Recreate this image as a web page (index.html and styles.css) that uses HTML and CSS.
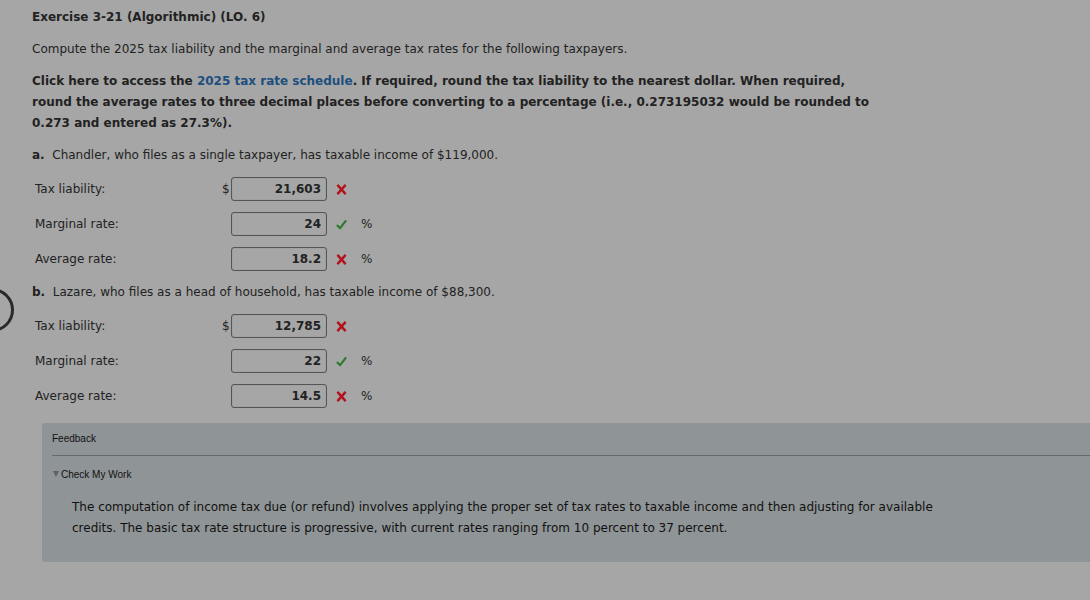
FILE: index.html
```html
<!DOCTYPE html>
<html>
<head>
<meta charset="utf-8">
<link rel="stylesheet" href="styles.css">
</head>
<body>
<div class="ring"></div>
<main class="page">
  <h1 class="title">Exercise 3-21 (Algorithmic) (LO. 6)</h1>
  <p class="intro">Compute the 2025 tax liability and the marginal and average tax rates for the following taxpayers.</p>
  <p class="instr">Click here to access the <a class="link">2025 tax rate schedule</a>. If required, round the tax liability to the nearest dollar. When required, round the average rates to three decimal places before converting to a percentage (i.e., 0.273195032 would be rounded to 0.273 and entered as 27.3%).</p>

  <section class="part">
    <p class="lead"><b>a.</b>&nbsp; Chandler, who files as a single taxpayer, has taxable income of $119,000.</p>
    <div class="row"><span class="lbl">Tax liability:</span><span class="cur">$</span><span class="box">21,603</span><span class="mark"><svg class="ico" viewBox="0 0 12 12"><path d="M1.5 1 L10.5 11 M10.5 1 L1.5 11" stroke="#b3121a" stroke-width="2.6" fill="none"/></svg></span><span class="unit"></span></div>
    <div class="row"><span class="lbl">Marginal rate:</span><span class="cur"></span><span class="box">24</span><span class="mark"><svg class="ico" viewBox="0 0 12 12"><path d="M1 6.5 L4.5 10 L11 1.5" stroke="#2f7a30" stroke-width="2.4" fill="none" stroke-linejoin="round"/></svg></span><span class="unit">%</span></div>
    <div class="row"><span class="lbl">Average rate:</span><span class="cur"></span><span class="box">18.2</span><span class="mark"><svg class="ico" viewBox="0 0 12 12"><path d="M1.5 1 L10.5 11 M10.5 1 L1.5 11" stroke="#b3121a" stroke-width="2.6" fill="none"/></svg></span><span class="unit">%</span></div>
  </section>

  <section class="part">
    <p class="lead"><b>b.</b>&nbsp; Lazare, who files as a head of household, has taxable income of $88,300.</p>
    <div class="row"><span class="lbl">Tax liability:</span><span class="cur">$</span><span class="box">12,785</span><span class="mark"><svg class="ico" viewBox="0 0 12 12"><path d="M1.5 1 L10.5 11 M10.5 1 L1.5 11" stroke="#b3121a" stroke-width="2.6" fill="none"/></svg></span><span class="unit"></span></div>
    <div class="row"><span class="lbl">Marginal rate:</span><span class="cur"></span><span class="box">22</span><span class="mark"><svg class="ico" viewBox="0 0 12 12"><path d="M1 6.5 L4.5 10 L11 1.5" stroke="#2f7a30" stroke-width="2.4" fill="none" stroke-linejoin="round"/></svg></span><span class="unit">%</span></div>
    <div class="row"><span class="lbl">Average rate:</span><span class="cur"></span><span class="box">14.5</span><span class="mark"><svg class="ico" viewBox="0 0 12 12"><path d="M1.5 1 L10.5 11 M10.5 1 L1.5 11" stroke="#b3121a" stroke-width="2.6" fill="none"/></svg></span><span class="unit">%</span></div>
  </section>

  <div class="feedback">
    <div class="fb-head">Feedback</div>
    <div class="fb-toggle"><span class="tri"></span>Check My Work</div>
    <div class="fb-body">The computation of income tax due (or refund) involves applying the proper set of tax rates to taxable income and then adjusting for available credits. The basic tax rate structure is progressive, with current rates ranging from 10 percent to 37 percent.</div>
  </div>
</main>
</body>
</html>
```
FILE: styles.css
```css
html, body {
  margin: 0;
  padding: 0;
  background: #a6a6a6;
  overflow: hidden;
}
body {
  width: 1090px;
  height: 600px;
  position: relative;
  font-family: "DejaVu Sans", Verdana, sans-serif;
  font-size: 12px;
  color: #222;
}
.ring {
  position: absolute;
  left: -30px;
  top: 288px;
  width: 38px;
  height: 38px;
  border: 3px solid #2a2a2a;
  border-radius: 50%;
}
.page {
  padding: 8px 0 0 32px;
}
.title {
  font-size: 12px;
  font-weight: bold;
  margin: 0;
  line-height: 18px;
}
.intro {
  margin: 14px 0 0;
  line-height: 18px;
}
.instr {
  margin: 13px 0 0;
  font-weight: bold;
  line-height: 21px;
  width: 840px;
}
.link { color: #1c4f7e; }
.part { margin-top: 12px; }
.lead { margin: 0; padding-bottom: 2px; line-height: 18px; }
.row {
  display: flex;
  align-items: center;
  height: 24px;
  margin-top: 11px;
  padding-left: 3px;
}
.lbl { width: 187px; }
.cur { width: 9px; }
.box {
  box-sizing: border-box;
  width: 96px;
  height: 24px;
  border: 1px solid #555;
  border-radius: 3px;
  box-shadow: inset 0 0 1px #777;
  text-align: right;
  padding-right: 5px;
  font-weight: bold;
  line-height: 22px;
}
.mark {
  width: 28px;
  display: flex;
  justify-content: center;
}
.ico { width: 11px; height: 11px; display: block; }
.unit { margin-left: 6px; }
.feedback {
  margin: 15px 0 0 10px;
  background: #8f9496;
  border-radius: 3px 0 0 3px;
  height: 139px;
  padding: 10px 0 0 10px;
  box-sizing: border-box;
  font-family: "Liberation Sans", Arial, sans-serif;
}
.fb-head {
  font-size: 10px;
  line-height: 12px;
  padding-bottom: 10px;
  border-bottom: 1px solid #666a6c;
  color: #111;
}
.fb-toggle {
  display: flex;
  align-items: center;
  font-size: 10px;
  margin-top: 12px;
  color: #111;
  line-height: 14px;
  padding-left: 1px;
}
.tri {
  width: 0;
  height: 0;
  border-left: 3px solid transparent;
  border-right: 3px solid transparent;
  border-top: 6px solid #5e6264;
  margin: -3px 2px 0 0;
}
.fb-body {
  margin: 15px 0 0 20px;
  width: 880px;
  font-family: "DejaVu Sans", Verdana, sans-serif;
  font-size: 12px;
  line-height: 21px;
  color: #111;
}
```
